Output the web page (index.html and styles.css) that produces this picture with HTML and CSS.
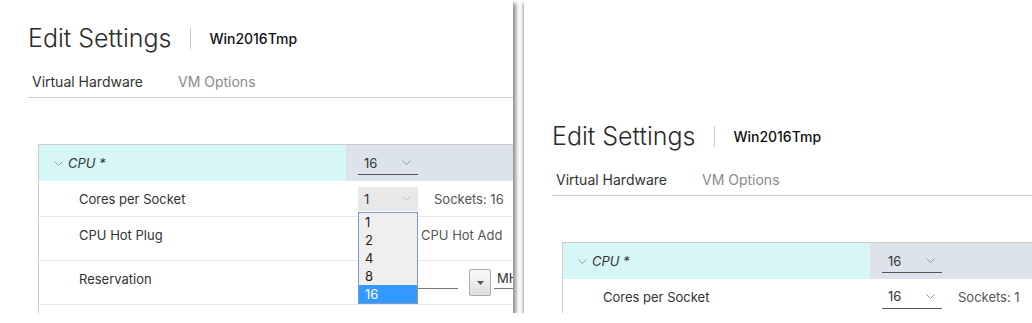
FILE: index.html
```html
<!DOCTYPE html>
<html lang="en">
<head>
    <meta charset="UTF-8">
    <title>Edit Settings - CPU</title>
    <link rel="stylesheet" href="styles.css">
</head>
<body>
    <div class="shots">
        <!-- before: cores per socket dropdown open -->
        <div class="shot shot-left">
            <div class="dialog">
                <div class="dialog-header">
                    <h1>Edit Settings</h1>
                    <span class="divider"></span>
                    <span class="vm-name">Win2016Tmp</span>
                </div>
                <div class="tabs">
                    <span class="tab active">Virtual Hardware</span>
                    <span class="tab">VM Options</span>
                </div>
                <div class="hw-table">
                    <div class="hw-row cpu-row">
                        <div class="hw-label">
                            <svg class="caret" width="9" height="5" viewBox="0 0 9 5"><polyline points="0.5,0.5 4.5,4.5 8.5,0.5" fill="none" stroke="#9a9a9a" stroke-width="1"/></svg>
                            <span class="cpu-title">CPU *</span>
                        </div>
                        <div class="hw-value">
                            <div class="select">16<svg class="caret" width="9" height="5" viewBox="0 0 9 5"><polyline points="0.5,0.5 4.5,4.5 8.5,0.5" fill="none" stroke="#9a9a9a" stroke-width="1"/></svg></div>
                        </div>
                    </div>
                    <div class="hw-row">
                        <div class="hw-label sub">Cores per Socket</div>
                        <div class="hw-value">
                            <div class="select open">1<svg class="caret" width="9" height="5" viewBox="0 0 9 5"><polyline points="0.5,0.5 4.5,4.5 8.5,0.5" fill="none" stroke="#c4c4c4" stroke-width="1"/></svg>
                                <ul class="options">
                                    <li>1</li>
                                    <li>2</li>
                                    <li>4</li>
                                    <li>8</li>
                                    <li class="selected">16</li>
                                </ul>
                            </div>
                            <span class="note">Sockets: 16</span>
                        </div>
                    </div>
                    <div class="hw-row tall">
                        <div class="hw-label sub">CPU Hot Plug</div>
                        <div class="hw-value top">
                            <span class="checkbox"></span>
                            <span class="note">CPU Hot Add</span>
                        </div>
                    </div>
                    <div class="hw-row tall">
                        <div class="hw-label sub">Reservation</div>
                        <div class="hw-value">
                            <span class="input"></span>
                            <span class="spin"><svg width="7" height="4" viewBox="0 0 7 4"><polygon points="0,0 7,0 3.5,4" fill="#555"/></svg></span>
                            <span class="unit">MHz</span>
                        </div>
                    </div>
                    <div class="hw-row"></div>
                </div>
            </div>
        </div>

        <!-- after: 16 cores per socket -->
        <div class="shot shot-right">
            <div class="dialog">
                <div class="dialog-header">
                    <h1>Edit Settings</h1>
                    <span class="divider"></span>
                    <span class="vm-name">Win2016Tmp</span>
                </div>
                <div class="tabs">
                    <span class="tab active">Virtual Hardware</span>
                    <span class="tab">VM Options</span>
                </div>
                <div class="hw-table">
                    <div class="hw-row cpu-row">
                        <div class="hw-label">
                            <svg class="caret" width="9" height="5" viewBox="0 0 9 5"><polyline points="0.5,0.5 4.5,4.5 8.5,0.5" fill="none" stroke="#9a9a9a" stroke-width="1"/></svg>
                            <span class="cpu-title">CPU *</span>
                        </div>
                        <div class="hw-value">
                            <div class="select">16<svg class="caret" width="9" height="5" viewBox="0 0 9 5"><polyline points="0.5,0.5 4.5,4.5 8.5,0.5" fill="none" stroke="#9a9a9a" stroke-width="1"/></svg></div>
                        </div>
                    </div>
                    <div class="hw-row">
                        <div class="hw-label sub">Cores per Socket</div>
                        <div class="hw-value">
                            <div class="select">16<svg class="caret" width="9" height="5" viewBox="0 0 9 5"><polyline points="0.5,0.5 4.5,4.5 8.5,0.5" fill="none" stroke="#9a9a9a" stroke-width="1"/></svg></div>
                            <span class="note">Sockets: 1</span>
                        </div>
                    </div>
                </div>
            </div>
        </div>
    </div>
</body>
</html>
```

FILE: styles.css
```css
* {
    box-sizing: border-box;
}
body {
    margin: 0;
    background-color: white;
    color: #333;
    font-family: Inter, "Open Sans", sans-serif;
}
.shots {
    display: flex;
    height: 313px;
}
.shot {
    position: relative;
    overflow: hidden;
    background-color: white;
    height: 313px;
}
.shot-left {
    width: 513px;
    flex: none;
    box-shadow: 3px 3px 4px rgba(0, 0, 0, 0.45);
    z-index: 1;
}
.shot-right {
    flex: 1;
    min-width: 0;
    margin-left: 11px;
    padding-top: 98px;
    box-shadow: -1px 3px 3px rgba(0, 0, 0, 0.4);
}
.dialog {
    padding: 17px 0 0 28px;
    width: 720px;
}
.dialog-header {
    display: flex;
    align-items: center;
    height: 42px;
}
.dialog-header h1 {
    margin: 0;
    font-size: 25px;
    font-weight: 300;
    color: #2b2b2b;
}
.divider {
    width: 1px;
    height: 21px;
    margin: 0 18px 0 19px;
    background-color: #ccc;
}
.vm-name {
    font-size: 14px;
    font-weight: 500;
    color: #111;
}
.tabs {
    display: flex;
    gap: 27px;
    margin-top: 8px;
    height: 31px;
    border-bottom: 1px solid #ccc;
}
.tab {
    padding: 0 4px;
    line-height: 30px;
    font-size: 14px;
    color: #8a8a8a;
}
.tab.active {
    color: #333;
}
.hw-table {
    margin: 46px 0 0 10px;
    border-top: 1px solid #ccc;
    border-left: 1px solid #ccc;
    font-size: 13px;
}
.hw-row {
    display: grid;
    grid-template-columns: 307px 1fr;
    height: 36px;
    border-bottom: 1px solid #e8e8e8;
}
.hw-row.tall {
    height: 44px;
}
.cpu-row {
    border-bottom: none;
}
.cpu-row .hw-label {
    background-color: #d7f6f8;
    padding-left: 15px;
}
.cpu-row .hw-value {
    background-color: #dce3ea;
}
.hw-label {
    display: flex;
    align-items: center;
    gap: 5px;
}
.hw-label.sub {
    padding-left: 40px;
}
.tall .hw-label {
    align-items: flex-start;
    padding-top: 10px;
}
.cpu-title {
    font-style: italic;
}
.hw-value {
    display: flex;
    align-items: center;
    padding-left: 12px;
}
.hw-value.top {
    align-items: flex-start;
    padding-top: 10px;
}
.select {
    position: relative;
    display: flex;
    align-items: center;
    justify-content: space-between;
    width: 60px;
    height: 24px;
    padding: 0 7px 0 6px;
    border-bottom: 1px solid #555;
}
.select.open {
    background-color: #e8e8e8;
    border-bottom: none;
}
.options {
    position: absolute;
    top: 100%;
    left: 0;
    width: 60px;
    margin: 1px 0 0;
    padding: 0;
    list-style: none;
    background-color: #efefef;
    border: 1px solid #7a9bce;
    z-index: 2;
}
.options li {
    height: 18px;
    line-height: 18px;
    padding-left: 6px;
    color: #222;
}
.options li.selected {
    background-color: #3399ff;
    color: white;
}
.note {
    margin-left: 16px;
    color: #555;
}
.checkbox {
    width: 13px;
    height: 13px;
    margin: 2px 0 0 45px;
    border: 1px solid #888;
}
.hw-value .checkbox + .note {
    margin-left: 5px;
}
.input {
    width: 100px;
    height: 20px;
    margin-bottom: 8px;
    border-bottom: 1px solid #777;
}
.spin {
    display: flex;
    align-items: center;
    justify-content: center;
    width: 22px;
    height: 27px;
    margin-left: 11px;
    border: 1px solid #aaa;
    border-radius: 2px;
    background: linear-gradient(#fafafa, #dedede);
}
.unit {
    width: 60px;
    height: 20px;
    margin: 0 0 8px 3px;
    padding-left: 3px;
    line-height: 19px;
    border-bottom: 1px solid #777;
    color: #333;
}
```
